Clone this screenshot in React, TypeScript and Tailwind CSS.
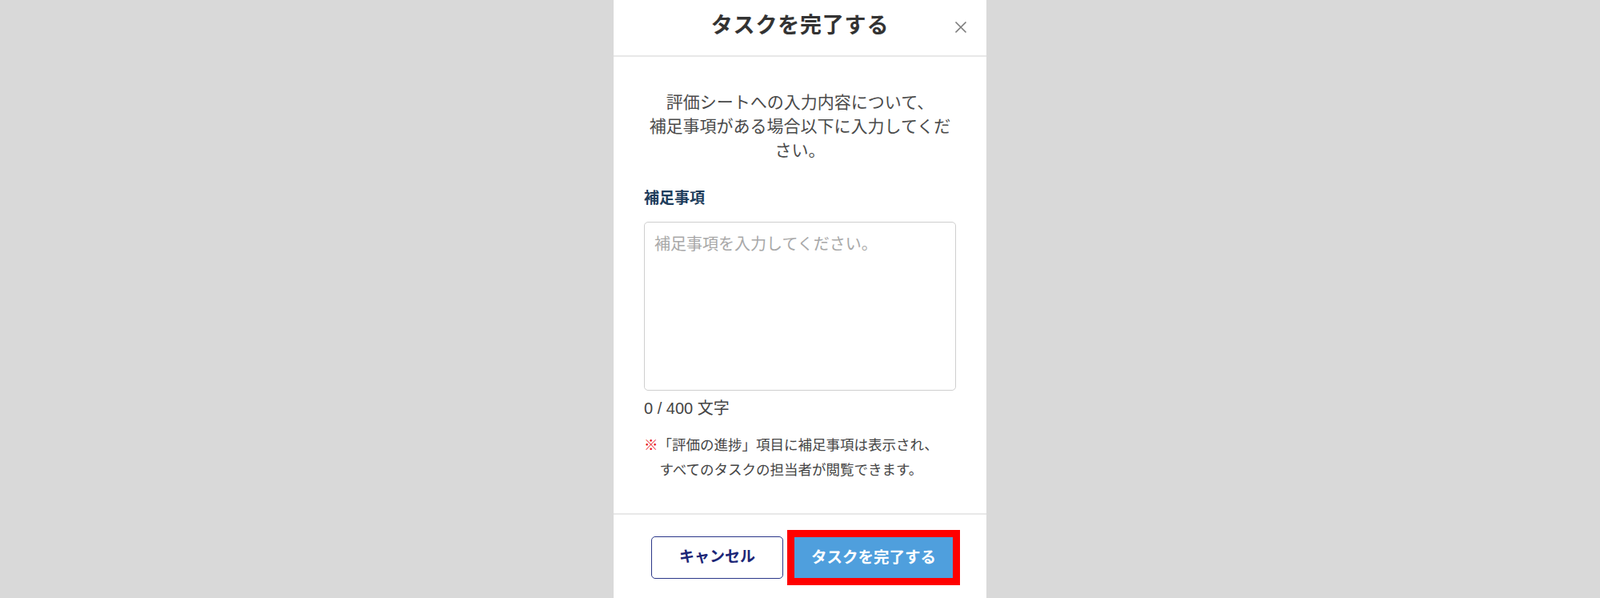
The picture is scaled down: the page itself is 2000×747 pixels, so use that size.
import { useState } from "react";

const MAX = 400;

export default function App() {
  const [note, setNote] = useState("");

  return (
    <div className="h-[747px] w-full bg-[#d9d9d9] flex justify-center overflow-hidden font-['Liberation_Sans','Noto_Sans_CJK_JP',sans-serif]">
      <div className="w-[466px] h-full bg-white flex flex-col">
        {/* header */}
        <div className="relative h-[71px] shrink-0 border-b-2 border-[#e8e8e8] flex items-center justify-center">
          <h1 className="text-[27px] leading-none font-bold text-[#333] tracking-[0.8px] -mt-[4px]">
            タスクを完了する
          </h1>
          <button className="absolute right-[22px] top-[24px] w-[20px] h-[20px] flex items-center justify-center text-[#7a7a7a]">
            <svg width="16" height="16" viewBox="0 0 16 16" fill="none" stroke="currentColor" strokeWidth="1.6">
              <path d="M1.5 1.5 L14.5 14.5 M14.5 1.5 L1.5 14.5" />
            </svg>
          </button>
        </div>

        {/* body */}
        <div className="px-[38px] pt-[42px] pb-[38px] border-b-2 border-[#e8e8e8]">
          <p className="text-center text-[21px] leading-[30px] text-[#4a4a4a]">
            評価シートへの入力内容について、
            <br />
            補足事項がある場合以下に入力してください。
          </p>

          <label className="block mt-[31px] text-[19px] leading-[28px] font-bold text-[#1e3d5c]">
            補足事項
          </label>
          <textarea
            value={note}
            maxLength={MAX}
            onChange={(e) => setNote(e.target.value)}
            placeholder="補足事項を入力してください。"
            className="mt-[15px] block w-full h-[211px] resize-none rounded-[5px] border border-[#cfcfcf] px-[12px] py-[12px] text-[20px] leading-[30px] text-[#333] placeholder:text-[#a8a8a8] outline-none"
          />
          <div className="mt-[7px] text-[20px] leading-[30px] text-[#444]">
            {note.length} / {MAX} 文字
          </div>

          <div className="mt-[16px] w-fit text-center text-[17.5px] leading-[31px] text-[#444]">
            <span className="text-[#e8141b] font-bold">※</span>「評価の進捗」項目に補足事項は表示され、
            <br />
            すべてのタスクの担当者が閲覧できます。
          </div>
        </div>

        {/* footer */}
        <div className="pt-[27px] flex justify-center gap-[14px] pl-[5px]">
          <button className="w-[165px] h-[53px] rounded-[5px] border-[1.5px] border-[#2a3688] bg-white text-[19px] font-bold text-[#1c2677]">
            キャンセル
          </button>
          <button className="w-[198px] h-[51px] mt-[1px] bg-[#4f9fdd] text-[19.5px] font-bold text-white outline-[9px] outline-solid outline-[#ff0000]">
            タスクを完了する
          </button>
        </div>
      </div>
    </div>
  );
}
